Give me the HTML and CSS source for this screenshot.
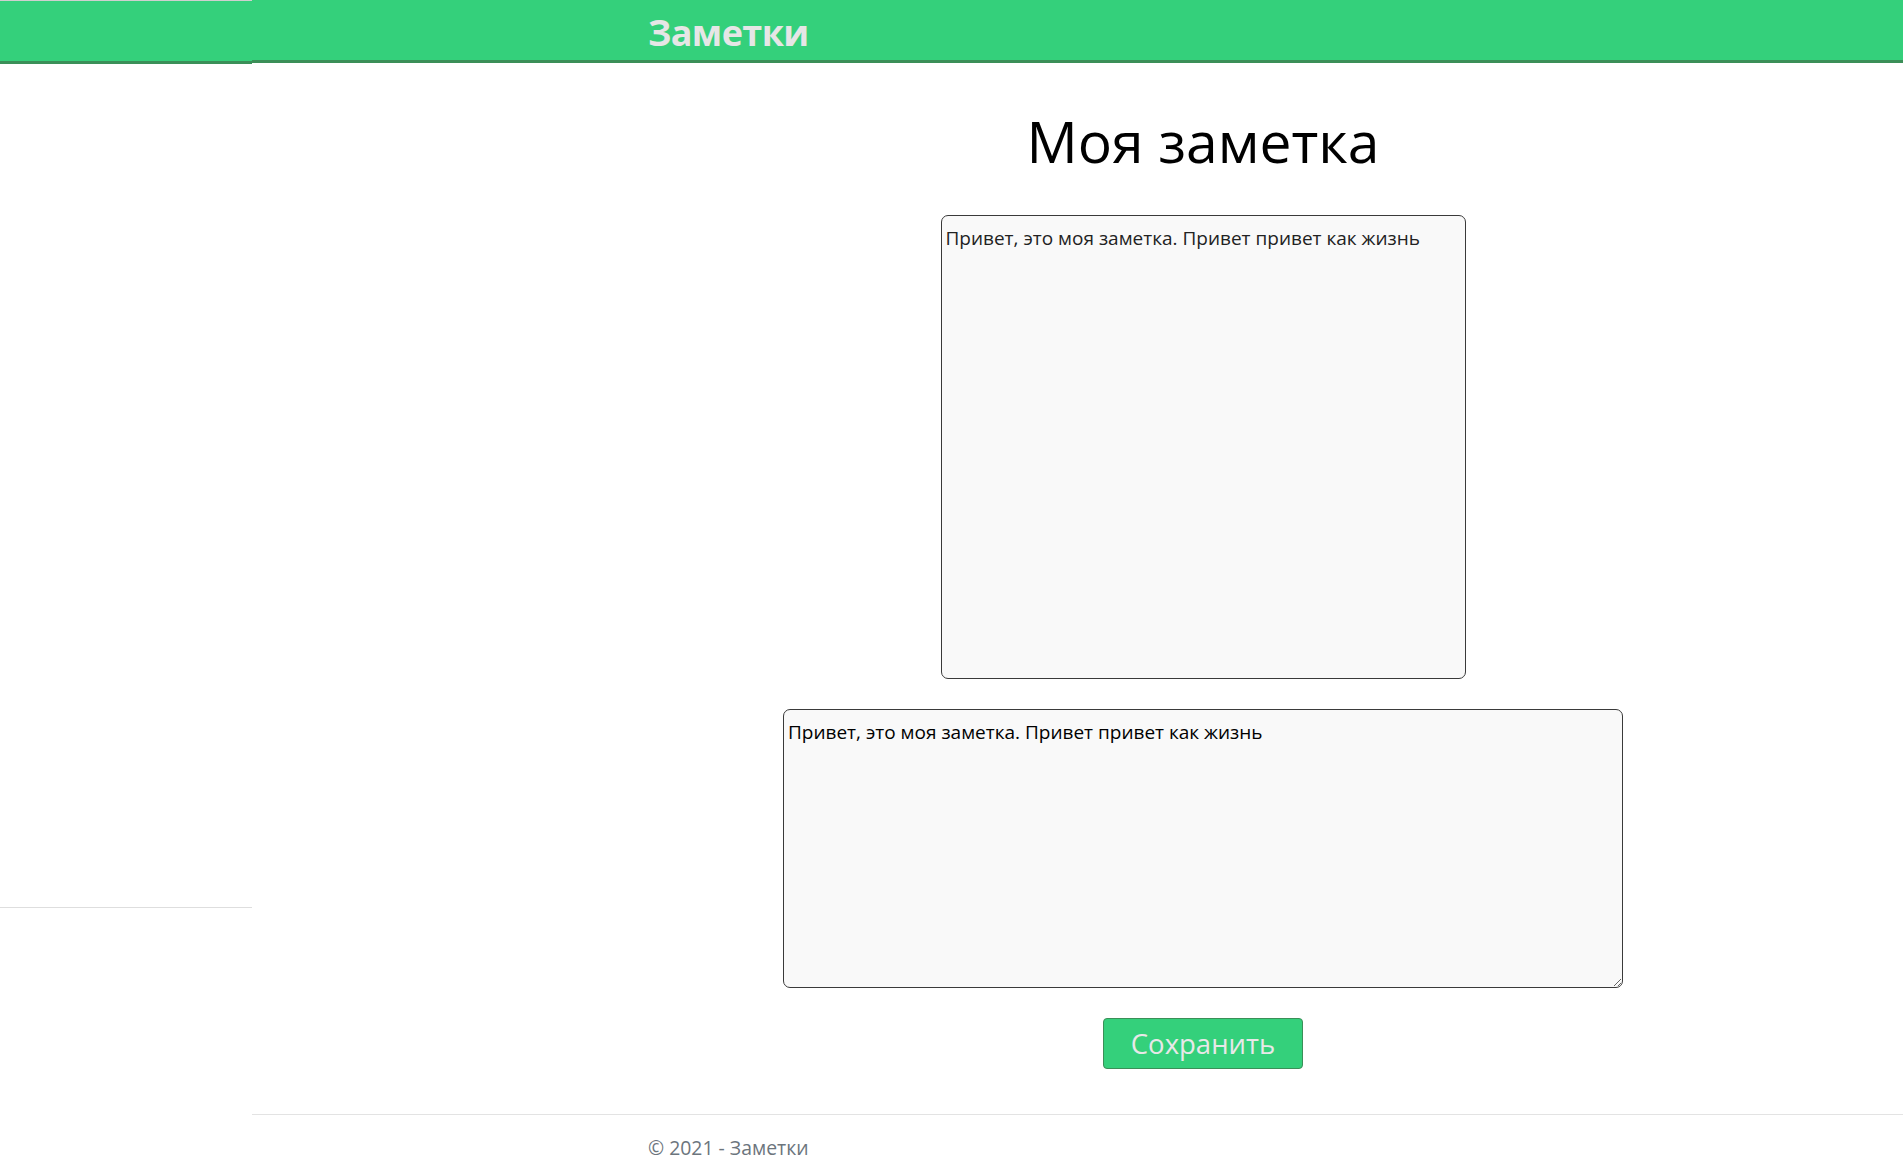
FILE: index.html
```html
<!DOCTYPE html>
<html lang="ru">
<head>
<meta charset="utf-8">
<title>Моя заметка - Заметки</title>
<link rel="stylesheet" href="styles.css">
</head>
<body>
<div class="page">
  <aside class="side">
    <div class="side-bar"></div>
  </aside>
  <div class="main">
    <header class="topbar">
      <div class="container">
        <a class="brand" href="#">Заметки</a>
      </div>
    </header>
    <main class="container content">
      <h1 class="title">Моя заметка</h1>
      <textarea class="note-view" readonly>Привет, это моя заметка. Привет привет как жизнь</textarea>
      <textarea class="note-edit">Привет, это моя заметка. Привет привет как жизнь</textarea>
      <button class="save-btn" type="button">Сохранить</button>
    </main>
    <footer class="footer">
      <div class="container">© 2021 - Заметки</div>
    </footer>
  </div>
</div>
</body>
</html>
```
FILE: styles.css
```css
html, body {
  margin: 0;
  padding: 0;
  background: #fff;
}
body {
  font-family: "Open Sans", "Noto Sans", sans-serif;
  color: #212529;
}
.page {
  display: flex;
  align-items: flex-start;
  width: 1903px;
}
.side {
  width: 252px;
  flex: none;
  height: 908px;
  box-sizing: border-box;
  border-top: 1px solid #cfcfcf;
  border-bottom: 1px solid #dedede;
}
.side-bar {
  height: 60px;
  background: #34d07b;
  border-bottom: 3px solid #3b8f58;
}
.main {
  flex: 1;
  min-width: 0;
}
.container {
  width: 1140px;
  box-sizing: border-box;
  margin-left: 381px;
  padding: 0 15px;
}
.topbar {
  height: 60px;
  background: #34d07b;
  border-bottom: 3px solid #3b8f58;
}
.topbar .container {
  height: 60px;
  display: flex;
  align-items: center;
  padding-top: 5px;
}
.brand {
  font-size: 36px;
  font-weight: 700;
  color: #e6e6e6;
  text-decoration: none;
  line-height: 1;
  letter-spacing: -0.6px;
}
.content {
  display: flex;
  flex-direction: column;
  align-items: center;
}
.title {
  margin: 44px 0 0;
  font-size: 57px;
  font-weight: 400;
  line-height: 1.2;
  color: #000;
}
.note-view,
.note-edit {
  display: block;
  box-sizing: border-box;
  font-family: "Open Sans", "Noto Sans", sans-serif;
  font-size: 19px;
  line-height: 1.35;
  background: #f9f9f9;
  border: 1px solid #3a3a3a;
  border-radius: 7px;
  padding: 10px 4px 3px;
  margin: 0;
}
.note-view {
  margin-top: 40px;
  width: 525px;
  height: 464px;
  color: #222;
  resize: none;
}
.note-edit {
  margin-top: 30px;
  width: 840px;
  height: 279px;
  color: #000;
}
.save-btn {
  margin-top: 30px;
  width: 200px;
  height: 51px;
  box-sizing: border-box;
  background: #34d07b;
  border: 1px solid #3b8f58;
  border-radius: 4px;
  color: #e8e8e8;
  font-family: "Open Sans", "Noto Sans", sans-serif;
  font-size: 27.5px;
  line-height: 1;
  padding: 0;
}
.footer {
  margin-top: 45px;
  border-top: 1px solid #e3e3e3;
  height: 61px;
}
.footer .container {
  color: #6c757d;
  font-size: 19.4px;
  line-height: 1;
  padding-top: 23px;
}
```
